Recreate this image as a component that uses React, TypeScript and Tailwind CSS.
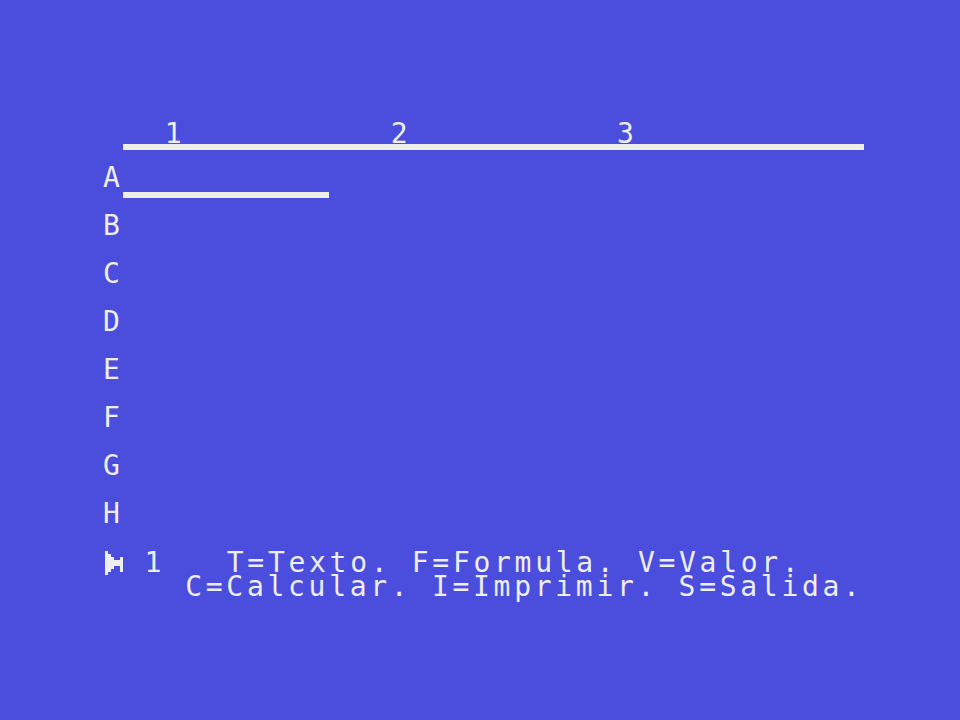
const rows = ['B', 'C', 'D', 'E', 'F', 'G', 'H']

function CursorGlyph() {
  // 6x8 pixel cell, drawn as blocks
  const cells: [number, number, number][] = [
    [0, 0, 8],
    [1, 1, 6],
    [2, 2, 4],
    [3, 3, 2],
    [4, 3, 2],
    [5, 2, 5],
  ]
  return (
    <svg width="21" height="24" viewBox="0 0 6 8" shapeRendering="crispEdges" className="block">
      {cells.map(([x, y, h]) => (
        <rect key={x} x={x} y={y} width="1" height={h} fill="#eeeeee" />
      ))}
    </svg>
  )
}

export default function App() {
  return (
    <div
      className="w-[960px] h-[720px] bg-[#4b4ddd] text-[#eeeeee] text-[28px] leading-[24px] tracking-[3.7px] whitespace-pre overflow-hidden"
      style={{ fontFamily: '"DejaVu Sans Mono", "Liberation Mono", monospace' }}
    >
      <div className="pt-[122px] pl-[103px]">
        <div className="h-[22px]">{'   1          2          3'}</div>
        <div className="ml-[20px] w-[741px] h-[6px] bg-[#eeeeee]" />
        <div className="mt-[16px] h-[48px]">
          <div className="h-[24px]">A</div>
          <div className="mt-[2px] ml-[20px] w-[206px] h-[6px] bg-[#eeeeee]" />
        </div>
        {rows.map(r => (
          <div key={r} className="h-[48px]">{r}</div>
        ))}
        <div className="mt-[1px] h-[24px] flex items-start">
          <CursorGlyph />
          <span>{' 1   T=Texto. F=Formula. V=Valor.'}</span>
        </div>
        <div className="h-[24px]">{'    C=Calcular. I=Imprimir. S=Salida.'}</div>
      </div>
    </div>
  )
}
